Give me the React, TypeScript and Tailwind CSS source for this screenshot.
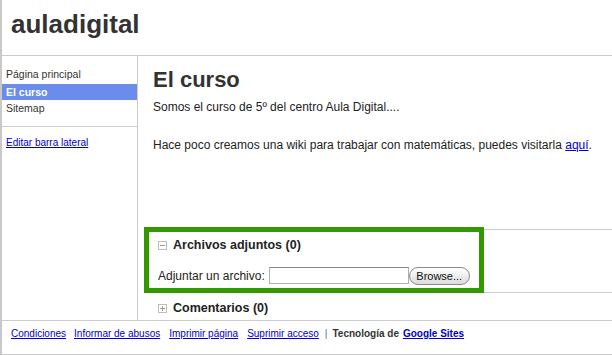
import React from "react";

function BoxIcon({ plus }: { plus?: boolean }) {
  return (
    <svg width="9" height="9" viewBox="0 0 9 9" className="shrink-0">
      <rect x="0.5" y="0.5" width="8" height="8" fill="#fff" stroke="#bdbdbd" />
      <line x1="2" y1="4.5" x2="7" y2="4.5" stroke="#9a9a9a" />
      {plus && <line x1="4.5" y1="2" x2="4.5" y2="7" stroke="#9a9a9a" />}
    </svg>
  );
}

export default function App() {
  return (
    <div
      className="relative w-[612px] h-[355px] overflow-hidden bg-white border-l-2 border-[#c8c8c8] text-[#333]"
      style={{ fontFamily: '"Liberation Sans", Arial, sans-serif' }}
    >
      {/* Header */}
      <div className="h-[56px] border-b border-[#cccccc] pl-[9px] pt-[9px]">
        <div className="text-[26px] leading-[30px] font-bold text-[#333]">auladigital</div>
      </div>

      {/* Body */}
      <div className="flex h-[264px]">
        {/* Sidebar */}
        <div className="w-[136px] shrink-0 border-r border-[#cccccc]">
          <div className="pt-[10px] pb-[10px] border-b border-[#cccccc] text-[10.5px]">
            <div className="h-[16px] leading-[16px] pl-[4px] mb-[2px] text-[#333]">Página principal</div>
            <div className="h-[16px] leading-[16px] pl-[4px] bg-[#6b8cea] text-white font-bold">El curso</div>
            <div className="h-[16px] leading-[16px] pl-[4px] text-[#333]">Sitemap</div>
          </div>
          <div className="pt-[9px] pl-[4px] text-[10px] leading-[14px]">
            <a className="text-[#0000cc] underline">Editar barra lateral</a>
          </div>
        </div>

        {/* Main */}
        <div className="flex-1 flex flex-col pl-[11px]">
          <div className="pl-[4px] pt-[11px]">
            <div className="text-[22px] leading-[26px] font-bold text-[#333]">El curso</div>
            <p className="mt-[7px] text-[12px] leading-[15px] text-[#222]">
              Somos el curso de 5º del centro Aula Digital....
            </p>
            <p className="mt-[23px] text-[12px] leading-[15px] text-[#222]">
              Hace poco creamos una wiki para trabajar con matemáticas, puedes visitarla{" "}
              <a className="text-[#0000cc] underline">aquí</a>.
            </p>
          </div>

          <div className="flex-1" />

          {/* Attachments */}
          <div className="border-t border-[#cccccc] h-[63px] pl-[9px] pt-[8px]">
            <div className="flex items-center gap-[6px] h-[14px]">
              <BoxIcon />
              <span className="text-[12.5px] font-bold text-[#222]">Archivos adjuntos (0)</span>
            </div>
            <div className="flex items-center mt-[14px] h-[19px]">
              <span className="text-[12px] text-[#222]">Adjuntar un archivo:</span>
              <div className="ml-[4px] w-[140px] h-[17px] border border-[#b0b0b0] border-t-[#888] bg-white" />
              <button className="w-[61px] h-[18px] rounded-full border border-[#8a8a8a] bg-gradient-to-b from-white to-[#dcdcdc] text-[11px] leading-[16px] text-[#111]">
                Browse...
              </button>
            </div>
          </div>

          {/* Comments */}
          <div className="border-t border-[#cccccc] h-[28px] pl-[9px] pt-[8px]">
            <div className="flex items-center gap-[6px] h-[14px]">
              <BoxIcon plus />
              <span className="text-[12.5px] font-bold text-[#222]">Comentarios (0)</span>
            </div>
          </div>
        </div>
      </div>

      {/* Footer */}
      <div className="h-[35px] border-t border-b border-[#cccccc] pl-[9px] pt-[6px] text-[10px] leading-[14px] flex items-start">
        <a className="text-[#0000cc] underline">Condiciones</a>
        <a className="ml-[8px] text-[#0000cc] underline">Informar de abusos</a>
        <a className="ml-[9px] text-[#0000cc] underline">Imprimir página</a>
        <a className="ml-[9px] text-[#0000cc] underline">Suprimir acceso</a>
        <span className="ml-[6px] text-[#5566aa]">|</span>
        <span className="ml-[5px] font-bold text-[#333]">Tecnología de</span>
        <a className="ml-[4px] font-bold text-[#0000cc] underline">Google Sites</a>
      </div>

      {/* Highlight annotation */}
      <div className="absolute left-[142px] top-[227px] w-[340px] h-[66px] border-[5px] border-[#339900] pointer-events-none" />
    </div>
  );
}
